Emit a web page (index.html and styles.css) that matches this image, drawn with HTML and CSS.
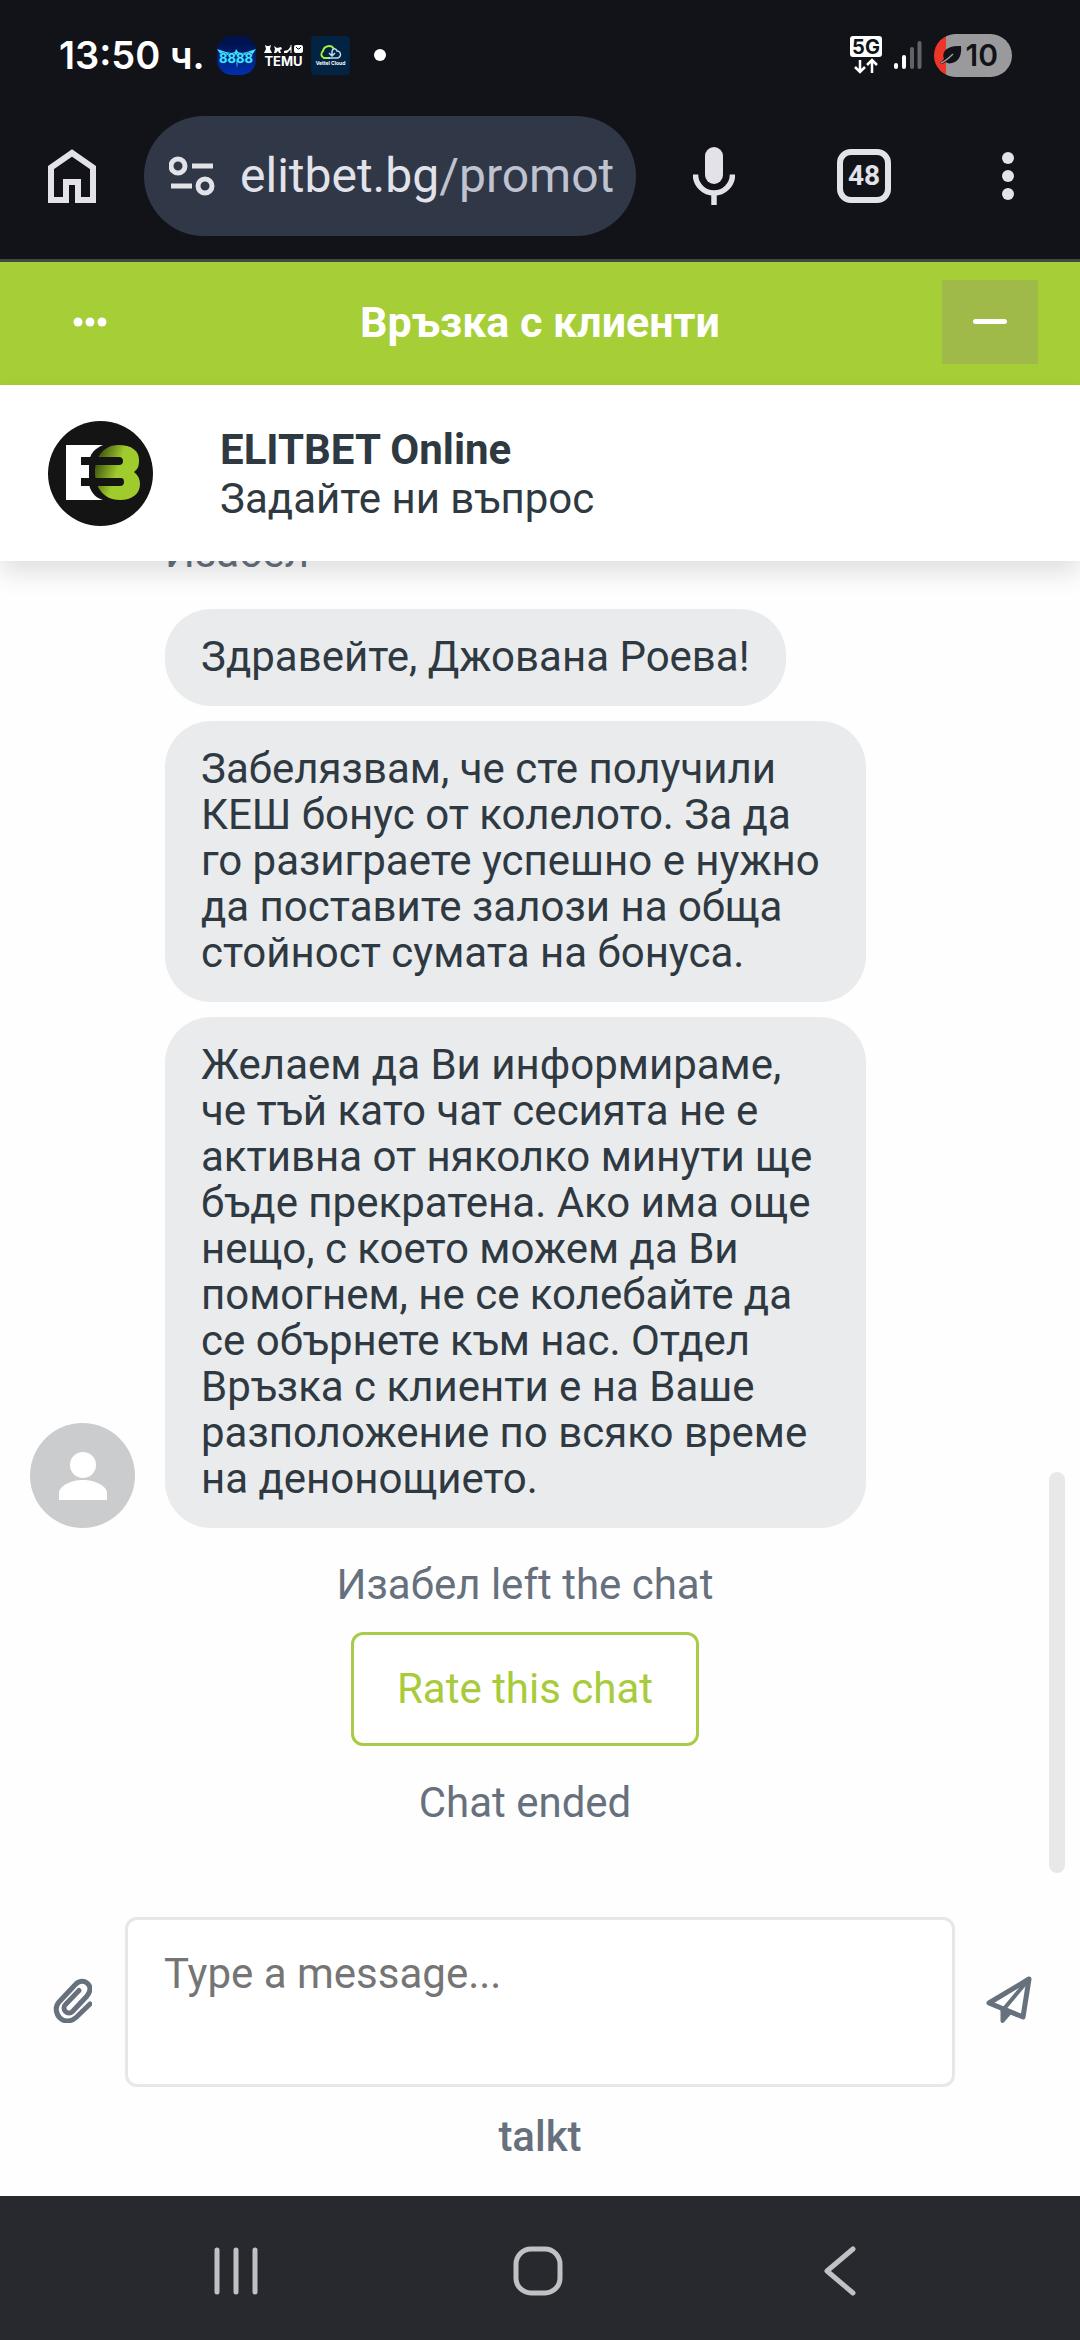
FILE: index.html
```html
<!DOCTYPE html>
<html lang="bg">
<head>
<meta charset="utf-8">
<meta name="viewport" content="width=device-width, initial-scale=1">
<title>Връзка с клиенти</title>
<link rel="stylesheet" href="styles.css">
</head>
<body>
<header class="browser">
  <div class="status">
    <time class="clock">13:50 ч.</time>
    <div class="notices">
      <svg class="notice" viewBox="0 0 39 39" aria-hidden="true">
        <defs><linearGradient id="night" x1="0" y1="0" x2="0" y2="1"><stop offset=".2" stop-color="#001350"/><stop offset="1" stop-color="#0030b0"/></linearGradient></defs>
        <rect width="39" height="39" rx="15" fill="url(#night)"/>
        <path d="M0 13l9 3 5 1 4-1 1-3 2 3 5 1 4-1 9-3-4 6H4zM19 24l1 8 1-8z" fill="#3fe6fb"/>
        <text x="19" y="27" font-size="13" class="logo-text" fill="#3fe6fb" stroke="#0b3fa8" stroke-width="1" paint-order="stroke">8888</text>
      </svg>
      <svg class="notice" viewBox="0 0 39 39" aria-hidden="true">
        <g fill="#fff"><path d="M1 9l2 1h2l2-1-1 4 2 4H0l2-4zM10 10l3 2 4-1 1 2-2 1 1 3h-2l-1-2-2 2h-2l1-4zM20 15l4-1 3-4v3l-4 4h-3zM27.500 9v8h-1v-8z"/><rect x="30" y="9" width="9" height="8" rx="2"/></g>
        <path d="M32 11l2 2h1l2-2" fill="none" stroke="#111318"/>
        <text x="19.500" y="30" font-size="13" class="logo-text" fill="#fff">TEMU</text>
      </svg>
      <svg class="notice" viewBox="0 0 39 39" aria-hidden="true">
        <rect width="39" height="39" rx="4" fill="#022341"/>
        <path d="M19 22h-6a4 4 0 0 1-1-7 6 6 0 0 1 11-2" fill="none" stroke="#a6f03a" stroke-width="2"/>
        <path d="M17 22h9a3.500 3.500 0 0 0 0-7c-1-3-4-3-5 0v5m-3-3l3 3 3-3" fill="none" stroke="#b9dcf5" stroke-width="1.500"/>
        <text x="19.500" y="29" font-size="5" class="logo-text" fill="#fff">Vettel Cloud</text>
      </svg>
    </div>
    <span class="more-dot"></span>
    <div class="signals">
      <svg width="32" height="38" viewBox="0 0 32 38" role="img" aria-label="5G">
        <rect width="32" height="21" rx="3" fill="#fff"/>
        <text x="16" y="18" font-size="20" class="logo-text" fill="#111318">5G</text>
        <path d="M10 24v11m-5-4l5 5 5-5M22 37V25m-5 4l5-5 5 5" fill="none" stroke="#fff" stroke-width="2.500"/>
      </svg>
      <svg width="28" height="30" viewBox="0 0 28 30" aria-hidden="true">
        <g stroke-width="4" stroke-linecap="round"><path d="M2 25v2M10 17v10" stroke="#fff"/><path d="M18 9v18M25.500 3v24" stroke="#626368"/></g>
      </svg>
      <div class="battery">
        <svg width="22" height="20" viewBox="0 0 22 20" aria-hidden="true"><path d="M4 14C1 6 8 0 21 1c1 8-2 16-9 17-3 1-5 0-6-1l-4 2-2-1z" fill="#111318"/><path d="M1 18c5-2 8-5 12-9" stroke="#9a9a9d" stroke-width="1.500" fill="none"/></svg>
        <span>10</span>
      </div>
    </div>
  </div>
  <nav class="toolbar" aria-label="Browser">
    <button class="tool" aria-label="Home"><svg width="48" height="54" viewBox="0 0 48 54"><path d="M3 51V18.500L24 4l21 14.500V51H30V33H18v18z" fill="none" stroke="#e3e2e9" stroke-width="6"/></svg></button>
    <button class="address">
      <svg width="46" height="40" viewBox="0 0 46 40" aria-hidden="true"><g fill="none" stroke="#e3e2e9" stroke-width="5"><circle cx="9" cy="10" r="7"/><circle cx="36" cy="30" r="7"/><path d="M23 10h21M2 30h21"/></g></svg>
      <span class="url">elitbet.bg<span class="path">/promot</span></span>
    </button>
    <button class="tool" aria-label="Voice search"><svg width="42" height="58" viewBox="0 0 42 58"><rect x="12" width="18" height="37" rx="9" fill="#e3e2e9"/><path d="M2.500 27.500a18.500 18.500 0 0 0 37 0M21 46v12" fill="none" stroke="#e3e2e9" stroke-width="5.500"/></svg></button>
    <button class="tool" aria-label="Tabs"><span class="tabs">48</span></button>
    <button class="tool" aria-label="Menu"><svg width="12" height="50" viewBox="0 0 12 50" fill="#e3e2e9"><circle cx="6" cy="7" r="6"/><circle cx="6" cy="25" r="6"/><circle cx="6" cy="43" r="6"/></svg></button>
  </nav>
</header>

<main class="chat">
  <div class="titlebar">
    <button class="bar-button" aria-label="Options"><svg width="34" height="10" viewBox="0 0 34 10" fill="#fff"><circle cx="5" cy="5" r="4.500"/><circle cx="17" cy="5" r="4.500"/><circle cx="29" cy="5" r="4.500"/></svg></button>
    <h1 class="title">Връзка с клиенти</h1>
    <button class="bar-button minimize" aria-label="Minimize"><svg width="34" height="6" viewBox="0 0 34 6"><rect width="34" height="5" rx="2.500" fill="#fff"/></svg></button>
  </div>
  <div class="agent">
    <svg class="agent-logo" viewBox="0 0 105 105" aria-hidden="true">
      <defs><linearGradient id="lime" x1="47" y1="30" x2="76" y2="40" gradientUnits="userSpaceOnUse"><stop offset="0" stop-color="#2c3c0c"/><stop offset=".9" stop-color="#a0cb2c"/></linearGradient></defs>
      <circle cx="52.500" cy="52.500" r="52.500" fill="#141414"/>
      <path d="M18 24h37C46 28 43 33 42 37c-3 9-3 22 0 30 2 5 6 10 13 12H18z" fill="#fff"/>
      <path d="M70 24c14 0 21 6 21 15 0 6-1 9-5 12 4 3 6 7 6 12 0 10-8 16-20 16-16 0-25-12-25-28s10-27 23-27z" fill="url(#lime)"/>
      <path d="M33 36h38q4 0 4 4t-4 4H38v13h35q3 0 3 4t-4 4H33z" fill="#141414"/>
      <path d="M33 44h8v13h-8z" fill="#fff"/>
    </svg>
    <div class="agent-text">
      <strong class="agent-name">ELITBET Online</strong>
      <span>Задайте ни въпрос</span>
    </div>
  </div>

  <section class="log" aria-label="Chat">
    <div class="group">
      <div class="avatar"><svg width="48" height="48" viewBox="0 0 48 48" fill="#fff" aria-hidden="true"><circle cx="24" cy="13" r="13"/><path d="M0 48V41c0-7 12-13 24-13s24 6 24 13v7z"/></svg></div>
      <div class="bubbles">
        <span class="author">Изабел</span>
        <p class="bubble">Здравейте, Джована Роева!</p>
        <p class="bubble">Забелязвам, че сте получили КЕШ бонус от колелото. За да го разиграете успешно е нужно да поставите залози на обща стойност сумата на бонуса.</p>
        <p class="bubble">Желаем да Ви информираме, че тъй като чат сесията не е активна от няколко минути ще бъде прекратена. Ако има още нещо, с което можем да Ви помогнем, не се колебайте да се обърнете към нас. Отдел Връзка с клиенти е на Ваше разположение по всяко време на денонощието.</p>
      </div>
    </div>
    <p class="event">Изабел left the chat</p>
    <button class="rate">Rate this chat</button>
    <p class="event">Chat ended</p>
    <span class="scrollbar"></span>
  </section>

  <form class="composer">
    <button type="button" class="composer-button attach" aria-label="Attach a file"><svg width="40" height="46" viewBox="0 0 40 46"><path d="M37 26L23 39.500C18 44 11 44 7 40S1.500 29 6 24L21 8c4-5 9-6 13-3s4 8 0 13L19.500 33.500c-2 2-5 2-7 0s-2-5 0-7L26 12.500" fill="none" stroke="#66717d" stroke-width="5" stroke-linecap="round" transform="translate(1 1)"/></svg></button>
    <textarea class="message" aria-label="Message" placeholder="Type a message..."></textarea>
    <button type="button" class="composer-button send" aria-label="Send"><svg width="46" height="48" viewBox="0 0 46 48"><path d="M43 3L3 27l34 14z" fill="none" stroke="#66717d" stroke-width="5" stroke-linejoin="round"/><path d="M43 3L17 34" stroke="#66717d" stroke-width="4"/><path d="M16.500 33v12l7-8z" fill="#66717d" stroke="#66717d" stroke-width="4" stroke-linejoin="round"/></svg></button>
  </form>
  <footer class="brand"><a href="#">talkt</a></footer>
</main>

<nav class="system" aria-label="System">
  <button class="key" aria-label="Recent apps"><svg width="44" height="48" viewBox="0 0 44 48"><path d="M3 3v42M22 3v42M41 3v42"/></svg></button>
  <button class="key" aria-label="Home"><svg width="50" height="50" viewBox="0 0 50 50"><rect x="3" y="3" width="44" height="44" rx="15"/></svg></button>
  <button class="key" aria-label="Back"><svg width="32" height="50" viewBox="0 0 32 50"><path d="M29 3L3 25l26 22"/></svg></button>
</nav>
</body>
</html>
```
FILE: styles.css
```css
* { box-sizing: border-box; }

body {
  display: flex;
  flex-direction: column;
  height: 100vh;
  margin: 0;
  background: #fefefe;
  color: #2f3941;
  font: 42px/46px Roboto, "Noto Sans", sans-serif;
}

button {
  display: flex;
  align-items: center;
  justify-content: center;
  padding: 0;
  border: 0;
  background: none;
  color: inherit;
  font: inherit;
}

svg { display: block; flex: none; }
p, h1 { margin: 0; }

.browser {
  flex: none;
  border-bottom: 3px solid #434844;
  background: #111318;
}

/* Status bar */
.status {
  display: flex;
  align-items: center;
  height: 110px;
  padding: 0 68px 0 59px;
  color: #fff;
}

.clock {
  font: 600 38px/46px Inter, sans-serif;
}

.notices {
  display: flex;
  gap: 8px;
  margin-left: 12px;
}

.notice { width: 39px; height: 39px; }

.logo-text {
  font-family: Inter, sans-serif;
  font-weight: 700;
  text-anchor: middle;
}

.more-dot {
  width: 12px;
  height: 12px;
  margin-left: 24px;
  border-radius: 50%;
  background: #fff;
}

.signals {
  display: flex;
  align-items: center;
  gap: 12px;
  margin-left: auto;
}

.battery {
  display: flex;
  align-items: center;
  gap: 4px;
  height: 43px;
  padding: 0 14px 0 6px;
  border-radius: 22px;
  background: linear-gradient(90deg, #ee3529 12px, #9a9a9d 12px);
  color: #111318;
  font: 600 30px/42px Inter, sans-serif;
}

/* Address row */
.toolbar {
  display: grid;
  grid-template-columns: 144px 1fr 156px 144px 144px;
  align-items: center;
  height: 149px;
  padding: 0 0 18px;
}

.tool { height: 120px; }

.address {
  gap: 25px;
  height: 120px;
  padding: 0 20px 0 25px;
  overflow: hidden;
  border-radius: 60px;
  background: #303746;
}

.url {
  flex: 1;
  overflow: hidden;
  color: #e2e2eb;
  font-size: 48px;
  line-height: 64px;
  text-align: left;
  white-space: nowrap;
}

.path { color: #bfc2d0; }

.tabs {
  width: 54px;
  height: 54px;
  border: 6px solid #e3e2e9;
  border-radius: 14px;
  color: #e3e2e9;
  font-size: 28px;
  font-weight: 700;
  line-height: 42px;
}

/* Chat header */
.chat {
  display: flex;
  flex: 1;
  flex-direction: column;
  min-height: 0;
}

.titlebar {
  display: flex;
  flex: none;
  align-items: center;
  justify-content: space-between;
  padding: 18px 42px 21px;
  background: #a5ce37;
  color: #fff;
}

.bar-button { width: 96px; height: 84px; }
.minimize { background: #a0ba4a; }

.title {
  font-size: 43px;
  font-weight: 700;
  line-height: 46px;
}

.agent {
  z-index: 1;
  display: flex;
  flex: none;
  align-items: center;
  gap: 67px;
  padding: 36px 48px 35px;
  background: #fff;
  box-shadow: 0 12px 24px rgba(0, 0, 0, .12);
}

.agent-logo { width: 105px; height: 105px; }

.agent-text {
  display: flex;
  flex-direction: column;
  line-height: 49px;
}

.agent-name { font-weight: 700; }

/* Conversation, pinned to the newest message */
.log {
  position: relative;
  display: flex;
  flex: 1;
  flex-direction: column;
  align-items: center;
  justify-content: flex-end;
  min-height: 0;
  padding: 0 30px 67px 0;
  overflow: hidden;
}

.group {
  display: flex;
  flex: none;
  align-items: flex-end;
  gap: 30px;
  width: 100%;
  padding-left: 30px;
}

.avatar {
  display: grid;
  flex: none;
  place-items: center;
  width: 105px;
  height: 105px;
  border-radius: 50%;
  background: #cbccce;
}

.bubbles {
  display: flex;
  flex-direction: column;
  align-items: flex-start;
  gap: 15px;
  max-width: 701px;
}

.author {
  margin-bottom: 18px;
  color: #66717d;
}

.bubble {
  padding: 25px 36px 26px;
  border-radius: 46px;
  background: #e9ebed;
}

.event {
  flex: none;
  color: #66717d;
}

.group + .event { margin: 34px 0 24px; }

.rate {
  flex: none;
  margin-bottom: 34px;
  padding: 31px 43px;
  border: 3px solid #a8cc4a;
  border-radius: 12px;
  background: #fff;
  color: #a8cb3c;
}

.scrollbar {
  position: absolute;
  right: 15px;
  bottom: 20px;
  width: 16px;
  height: 401px;
  border-radius: 8px;
  background: #e8e8e8;
}

/* Message box */
.composer {
  display: flex;
  flex: none;
  align-items: center;
  margin-top: 24px;
}

.composer-button {
  flex: none;
  width: 125px;
  height: 125px;
  padding-bottom: 4px;
}

.attach { padding-left: 18px; }
.send { padding-right: 18px; }

.message {
  flex: 1;
  min-width: 0;
  height: 170px;
  padding: 31px 36px;
  border: 3px solid #e7e7e7;
  border-radius: 12px;
  background: #fff;
  color: inherit;
  font: inherit;
  resize: none;
}

.message::placeholder { color: #757575; opacity: 1; }

.brand {
  flex: none;
  padding: 27px 0 36px;
  text-align: center;
}

.brand a {
  color: #66717d;
  font-weight: 500;
  text-decoration: none;
}

/* System navigation */
.system {
  display: flex;
  flex: none;
  justify-content: center;
  gap: 202px;
  height: 144px;
  padding: 6px 4px 0 0;
  background: #28292e;
}

.key { width: 100px; }

.key svg {
  fill: none;
  stroke: #c0c1c5;
  stroke-width: 5;
  stroke-linecap: round;
  stroke-linejoin: round;
}
```
